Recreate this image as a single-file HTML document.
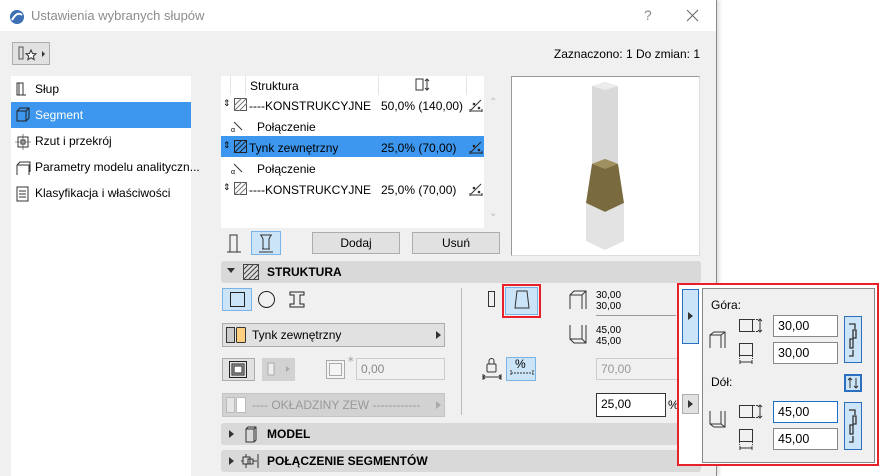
<!DOCTYPE html>
<html><head><meta charset="utf-8"><style>
*{box-sizing:border-box;margin:0;padding:0}
body{width:879px;height:476px;overflow:hidden;background:#fff;font-family:"Liberation Sans",sans-serif;font-size:12px;color:#000;position:relative}
.a{position:absolute}
.dlg{left:0;top:0;width:717px;height:476px;background:#f0f0f0;border-right:1px solid #8a8a8a;box-shadow:2px 0 4px rgba(0,0,0,.15)}
.btn{position:absolute;background:#e1e1e1;border:1px solid #adadad;text-align:center;line-height:20px;font-size:12px}
.sel{background:#cce4f7;border:1px solid #7ab4e6}
.inp{position:absolute;background:#fff;border:1px solid #7a7a7a;padding-left:4px;line-height:20px;font-size:12px}
.hdr{position:absolute;left:221px;width:480px;height:22px;background:#d9d9d9;border-radius:3px;font-weight:bold;font-size:12px;line-height:22px}
.li{position:absolute;left:35px;font-size:12px}
</style></head><body>
<div class="a dlg"></div>
<div class="a" style="left:0;top:0;width:716px;height:31px;background:#fff"></div>
<svg class="a" style="left:9px;top:9px" width="16" height="16"><circle cx="8" cy="8" r="7" fill="#3d6fb6"/><path d="M3 11 Q8 2 13 6" stroke="#fff" stroke-width="2" fill="none"/></svg>
<div class="a" style="left:31px;top:8px;font-size:13px;color:#8c8c8c">Ustawienia wybranych słupów</div>
<div class="a" style="left:644px;top:7px;font-size:14px;color:#888">?</div>
<svg class="a" style="left:686px;top:9px" width="13" height="13"><path d="M1 1L12 12M12 1L1 12" stroke="#666" stroke-width="1"/></svg>
<div class="btn" style="left:12px;top:42px;width:38px;height:23px"></div>
<svg class="a" style="left:16px;top:45px" width="32" height="18"><rect x="3" y="2" width="4" height="12" fill="none" stroke="#555"/><path d="M15 5l1.5 3.5 3.5.3-2.7 2.3.9 3.6-3.2-2-3.2 2 .9-3.6-2.7-2.3 3.5-.3z" fill="#fff" stroke="#333"/><path d="M26 6l3 3-3 3z" fill="#333"/></svg>
<div class="a" style="left:480px;top:47px;width:220px;text-align:right;font-size:12px">Zaznaczono: 1 Do zmian: 1</div>
<div class="a" style="left:11px;top:76px;width:180px;height:400px;background:#fff"></div>
<div class="a" style="left:11px;top:102px;width:180px;height:26px;background:#3d97ef"></div>
<svg class="a" style="left:15px;top:81px" width="16" height="16"><path d="M2 2h6v12H2zM4 2v12M8 14l3 0" stroke="#333" fill="none"/></svg>
<div class="li" style="top:82px">Słup</div>
<svg class="a" style="left:15px;top:107px" width="16" height="16"><path d="M2 4h9v10H2zM2 4l3-3h9v10l-3 3M11 4l3-3" stroke="#222" fill="none"/></svg>
<div class="li" style="top:108px;color:#fff">Segment</div>
<svg class="a" style="left:15px;top:134px" width="16" height="16"><rect x="3" y="3" width="10" height="10" fill="none" stroke="#333"/><rect x="6" y="6" width="4" height="4" fill="none" stroke="#333"/><path d="M8 0v16M0 8h16" stroke="#333" stroke-width=".6"/></svg>
<div class="li" style="top:134px">Rzut i przekrój</div>
<svg class="a" style="left:15px;top:160px" width="16" height="16"><path d="M2 5h12v10M2 5v10M2 5l3-3h10v10" stroke="#333" fill="none"/></svg>
<div class="li" style="top:160px">Parametry modelu analityczn...</div>
<svg class="a" style="left:16px;top:186px" width="14" height="16"><rect x="1" y="1" width="11" height="14" fill="none" stroke="#333"/><path d="M3 5h7M3 8h7M3 11h7" stroke="#333"/></svg>
<div class="li" style="top:186px">Klasyfikacja i właściwości</div>
<div class="a" style="left:221px;top:76px;width:263px;height:152px;background:#fff"></div>
<div class="a" style="left:484px;top:76px;width:16px;height:152px;background:#f0f0f0"></div>
<div class="a" style="left:489px;top:97px;font-size:10px;color:#bbb">&#8963;</div>
<div class="a" style="left:489px;top:208px;font-size:10px;color:#bbb">&#8964;</div>
<div class="a" style="left:230px;top:76px;width:1px;height:19px;background:#e5e5e5"></div>
<div class="a" style="left:245px;top:76px;width:1px;height:19px;background:#e5e5e5"></div>
<div class="a" style="left:378px;top:76px;width:1px;height:19px;background:#e5e5e5"></div>
<div class="a" style="left:466px;top:76px;width:1px;height:19px;background:#e5e5e5"></div>
<div class="a" style="left:250px;top:79px">Struktura</div>
<svg class="a" style="left:415px;top:78px" width="16" height="14"><rect x="1" y="1" width="7" height="11" fill="none" stroke="#333"/><path d="M12 1v11M10 3l2-2 2 2M10 10l2 2 2-2" stroke="#333" fill="none"/></svg>
<div class="a" style="left:221px;top:136px;width:263px;height:21px;background:#3d97ef"></div>
<div class="a" style="left:223px;top:98px;font-size:9px">&#8661;</div>
<svg class="a" style="left:234px;top:98px" width="13" height="13"><rect x=".5" y=".5" width="12" height="12" fill="#fff" stroke="#555"/><path d="M0 8L8 0M0 13L13 0M5 13L13 5" stroke="#777"/></svg>
<div class="a" style="left:249px;top:99px">----KONSTRUKCYJNE</div>
<div class="a" style="left:381px;top:99px">50,0% (140,00)</div>
<svg class="a" style="left:231px;top:121px" width="12" height="11"><path d="M3 1l8 8" stroke="#333"/><text x="0" y="11" font-size="7" font-family="Liberation Sans">α</text></svg>
<div class="a" style="left:257px;top:120px">Połączenie</div>
<div class="a" style="left:223px;top:140px;font-size:9px">&#8661;</div>
<svg class="a" style="left:234px;top:140px" width="13" height="13"><rect x=".5" y=".5" width="12" height="12" fill="#3d97ef" stroke="#222"/><path d="M0 8L8 0M0 13L13 0M5 13L13 5" stroke="#222"/></svg>
<div class="a" style="left:249px;top:141px">Tynk zewnętrzny</div>
<div class="a" style="left:381px;top:141px">25,0% (70,00)</div>
<svg class="a" style="left:231px;top:163px" width="12" height="11"><path d="M3 1l8 8" stroke="#333"/><text x="0" y="11" font-size="7" font-family="Liberation Sans">α</text></svg>
<div class="a" style="left:257px;top:162px">Połączenie</div>
<div class="a" style="left:223px;top:182px;font-size:9px">&#8661;</div>
<svg class="a" style="left:234px;top:182px" width="13" height="13"><rect x=".5" y=".5" width="12" height="12" fill="#fff" stroke="#555"/><path d="M0 8L8 0M0 13L13 0M5 13L13 5" stroke="#777"/></svg>
<div class="a" style="left:249px;top:183px">----KONSTRUKCYJNE</div>
<div class="a" style="left:381px;top:183px">25,0% (70,00)</div>
<svg class="a" style="left:469px;top:98px" width="14" height="14"><path d="M2 12L12 2M1 13h12M1 11v3M13 11v3" stroke="#333"/><circle cx="5" cy="6" r="1.3" fill="#333"/><circle cx="10" cy="10" r="1.3" fill="#333"/></svg>
<svg class="a" style="left:469px;top:140px" width="14" height="14"><path d="M2 12L12 2M1 13h12M1 11v3M13 11v3" stroke="#222"/><circle cx="5" cy="6" r="1.3" fill="#222"/><circle cx="10" cy="10" r="1.3" fill="#222"/></svg>
<svg class="a" style="left:469px;top:182px" width="14" height="14"><path d="M2 12L12 2M1 13h12M1 11v3M13 11v3" stroke="#333"/><circle cx="5" cy="6" r="1.3" fill="#333"/><circle cx="10" cy="10" r="1.3" fill="#333"/></svg>
<svg class="a" style="left:226px;top:233px" width="16" height="20"><path d="M1 19h14M4 19V2h7v17" stroke="#333" fill="none"/></svg>
<div class="a sel" style="left:251px;top:231px;width:30px;height:24px"></div>
<svg class="a" style="left:257px;top:233px" width="18" height="20"><path d="M2 19h14M3 2h12M4 2l2 4v10h6V6l2-4M5 16h8" stroke="#333" fill="none"/></svg>
<div class="btn" style="left:312px;top:232px;width:88px;height:22px">Dodaj</div>
<div class="btn" style="left:412px;top:232px;width:88px;height:22px">Usuń</div>
<div class="a" style="left:511px;top:76px;width:189px;height:180px;background:#fff;border:1px solid #999;border-right-color:#ddd;border-bottom-color:#ddd"></div>
<svg class="a" style="left:512px;top:77px" width="188" height="178"><path d="M93 5l13 4v78l-13 4-13-4V9z" fill="#d9d9d9"/><path d="M80 9l13-4 13 4-13 4z" fill="#ececec"/><path d="M93 82l13 5 6 39-19 9-19-9 6-39z" fill="#7a6a40"/><path d="M80 87l13-5 13 5-13 5z" fill="#a0905f"/><path d="M74 126l19 9 19-9v38l-19 9-19-9z" fill="#e3e3e3"/></svg>
<div class="hdr" style="top:261px"><span style="position:absolute;left:46px">STRUKTURA</span></div>
<svg class="a" style="left:227px;top:268px" width="8" height="6"><path d="M0 0h8L4 5z" fill="#333"/></svg>
<svg class="a" style="left:243px;top:264px" width="16" height="16"><rect x=".5" y=".5" width="15" height="15" fill="#ddd" stroke="#444"/><path d="M0 6L6 0M0 11L11 0M0 16L16 0M5 16L16 5M10 16L16 10" stroke="#444"/></svg>
<div class="a sel" style="left:222px;top:288px;width:30px;height:23px"></div>
<div class="a" style="left:230px;top:292px;width:15px;height:15px;border:1px solid #222"></div>
<div class="a" style="left:258px;top:291px;width:17px;height:17px;border:1px solid #222;border-radius:50%"></div>
<svg class="a" style="left:289px;top:291px" width="16" height="17"><path d="M1 1h14v3h-4v9h4v3H1v-3h4V4H1z" fill="none" stroke="#222"/></svg>
<div class="btn" style="left:222px;top:323px;width:223px;height:24px;text-align:left"></div>
<svg class="a" style="left:226px;top:327px" width="22" height="16"><rect x=".5" y=".5" width="8" height="15" fill="#ccc" stroke="#333"/><rect x="10.5" y=".5" width="9" height="15" rx="1" fill="#ffd080" stroke="#333"/></svg>
<div class="a" style="left:252px;top:328px">Tynk zewnętrzny</div>
<svg class="a" style="left:436px;top:331px" width="5" height="8"><path d="M0 0l5 4-5 4z" fill="#333"/></svg>
<div class="btn" style="left:222px;top:358px;width:33px;height:23px"></div>
<svg class="a" style="left:229px;top:361px" width="18" height="17"><rect x=".5" y=".5" width="17" height="16" fill="none" stroke="#222"/><rect x="3" y="3" width="12" height="11" fill="#bbb" stroke="#222"/><rect x="5" y="5" width="8" height="7" fill="#fff" stroke="#222"/></svg>
<div class="a" style="left:262px;top:358px;width:33px;height:23px;background:#d2d2d2"></div>
<svg class="a" style="left:265px;top:362px" width="28" height="15"><rect x="3" y="1" width="6" height="12" fill="#eee" stroke="#aaa"/><path d="M21 4l4 3-4 3z" fill="#aaa"/></svg>
<div class="a" style="left:326px;top:360px;width:19px;height:19px;border:1px solid #aaa;background:#f5f5f5"></div>
<div class="a" style="left:329px;top:363px;width:13px;height:13px;border:1px solid #aaa"></div>
<div class="a" style="left:347px;top:354px;font-size:9px;color:#aaa">&#8727;</div>
<div class="inp" style="left:356px;top:358px;width:89px;height:22px;border-color:#ccc;color:#888;background:#f0f0f0">0,00</div>
<div class="a" style="left:222px;top:393px;width:223px;height:24px;background:#d2d2d2;border:1px solid #c4c4c4"></div>
<svg class="a" style="left:226px;top:397px" width="22" height="16"><rect x=".5" y=".5" width="8" height="15" fill="#e5e5e5" stroke="#bbb"/><rect x="10.5" y=".5" width="9" height="15" rx="1" fill="#fff" stroke="#bbb"/></svg>
<div class="a" style="left:252px;top:398px;color:#999">---- OKŁADZINY ZEW ------------</div>
<svg class="a" style="left:436px;top:401px" width="5" height="8"><path d="M0 0l5 4-5 4z" fill="#aaa"/></svg>
<div class="a" style="left:461px;top:288px;width:1px;height:127px;background:#bbb"></div>
<div class="a" style="left:488px;top:291px;width:7px;height:16px;border:1px solid #333"></div>
<div class="a" style="left:502px;top:284px;width:39px;height:34px;border:2px solid #e8202a"></div>
<div class="a sel" style="left:505px;top:287px;width:33px;height:28px"></div>
<svg class="a" style="left:513px;top:290px" width="18" height="20"><path d="M4 1h10l2 17H2z" fill="none" stroke="#333"/></svg>
<svg class="a" style="left:568px;top:290px" width="20" height="20"><path d="M2 19V5l4-4h12v18M2 5h12v14M14 5l4-4" stroke="#333" fill="none"/></svg>
<div class="a" style="left:596px;top:290px;font-size:10px;line-height:11px">30,00<br>30,00</div>
<div class="a" style="left:596px;top:315px;width:80px;height:1px;background:#999"></div>
<svg class="a" style="left:568px;top:324px" width="20" height="20"><path d="M2 1v14l4 4h12V1M2 15h12V1M14 15l4 4" stroke="#333" fill="none"/></svg>
<div class="a" style="left:596px;top:325px;font-size:10px;line-height:11px">45,00<br>45,00</div>
<svg class="a" style="left:482px;top:357px" width="20" height="24"><rect x="5" y="7" width="9" height="8" rx="1" fill="none" stroke="#333"/><path d="M7 7V4a2.5 2.5 0 0 1 5 0v3" fill="none" stroke="#333"/><path d="M1 20h18M1 17v6M19 17v6M3 18l-2 2 2 2M17 18l2 2-2 2" stroke="#333" fill="none"/></svg>
<div class="a sel" style="left:506px;top:357px;width:30px;height:24px"></div>
<div class="a" style="left:515px;top:357px;font-size:12px">%</div>
<svg class="a" style="left:510px;top:369px" width="24" height="8"><path d="M1 1v6M23 1v6M1 4h22" stroke="#333" stroke-dasharray="2 1"/></svg>
<div class="inp" style="left:596px;top:358px;width:100px;height:22px;border-color:#ccc;color:#999;background:#f0f0f0">70,00</div>
<div class="inp" style="left:596px;top:393px;width:70px;height:24px;border-color:#333">25,00</div>
<div class="a" style="left:668px;top:398px">%</div>
<div class="hdr" style="top:423px"><span style="position:absolute;left:46px">MODEL</span></div>
<svg class="a" style="left:229px;top:430px" width="6" height="8"><path d="M0 0l5 4-5 4z" fill="#333"/></svg>
<svg class="a" style="left:245px;top:426px" width="12" height="17"><path d="M1 3h8v13H1zM1 3l2-2h8v13l-2 2M9 3l2-2" fill="none" stroke="#333"/></svg>
<div class="hdr" style="top:450px"><span style="position:absolute;left:46px">POŁĄCZENIE SEGMENTÓW</span></div>
<svg class="a" style="left:229px;top:457px" width="6" height="8"><path d="M0 0l5 4-5 4z" fill="#333"/></svg>
<svg class="a" style="left:241px;top:453px" width="20" height="16"><rect x="2" y="4" width="7" height="7" fill="none" stroke="#333"/><rect x="7" y="6" width="5" height="5" fill="none" stroke="#333"/><path d="M0 8h2M12 8h4M17 1v14M5 1v3M5 11v4" stroke="#333"/></svg>
<div class="a" style="left:677px;top:283px;width:202px;height:183px;border:2px solid #e8202a;background:#fff"></div>
<div class="a sel" style="left:682px;top:289px;width:17px;height:55px;border-color:#2c6fc0"></div>
<svg class="a" style="left:688px;top:312px" width="5" height="8"><path d="M0 0l5 4-5 4z" fill="#333"/></svg>
<div class="a" style="left:682px;top:394px;width:17px;height:20px;background:#e1e1e1;border:1px solid #adadad"></div>
<svg class="a" style="left:688px;top:400px" width="5" height="8"><path d="M0 0l5 4-5 4z" fill="#333"/></svg>
<div class="a" style="left:702px;top:288px;width:173px;height:175px;background:#f0f0f0;border:1px solid #888"></div>
<div class="a" style="left:711px;top:298px">Góra:</div>
<svg class="a" style="left:709px;top:331px" width="18" height="18"><path d="M1 17V4l4-3h11v16M1 4h11v13M12 4l4-3" stroke="#333" fill="none"/></svg>
<svg class="a" style="left:739px;top:318px" width="25" height="15"><rect x=".5" y="1.5" width="13" height="12" fill="none" stroke="#333"/><path d="M14 1.5h5M14 13.5h5" stroke="#333" stroke-dasharray="2 1"/><path d="M21 2v11M19 3l2-2 2 2M19 12l2 2 2-2" stroke="#333" fill="none"/></svg>
<svg class="a" style="left:739px;top:343px" width="15" height="21"><rect x=".5" y=".5" width="13" height="12" fill="none" stroke="#333"/><path d="M.5 13v4M13.5 13v4" stroke="#333" stroke-dasharray="1 1"/><path d="M1 19h12M1 17v4M13 17v4" stroke="#333"/></svg>
<div class="inp" style="left:773px;top:315px;width:65px;height:22px;border-color:#888;font-size:12.5px">30,00</div>
<div class="inp" style="left:773px;top:342px;width:65px;height:22px;border-color:#888;font-size:12.5px">30,00</div>
<div class="a sel" style="left:844px;top:316px;width:18px;height:47px;border-color:#2c6fc0"></div>
<svg class="a" style="left:846px;top:320px" width="14" height="40"><path d="M3 4h6v5M7 10v8h3v-8zM4 19v9h3v-9zM7 30v6H3" stroke="#333" fill="none" stroke-width="1.3"/></svg>
<div class="a" style="left:711px;top:375px">Dół:</div>
<div class="a sel" style="left:844px;top:374px;width:18px;height:18px;border:2px solid #2c6fc0"></div>
<svg class="a" style="left:846px;top:376px" width="14" height="14"><path d="M4 12V2M2 4l2-2 2 2M10 2v10M8 10l2 2 2-2" stroke="#333" fill="none"/></svg>
<svg class="a" style="left:709px;top:410px" width="18" height="18"><path d="M1 1v13l4 3h11V1M1 14h11V1M12 14l4 3" stroke="#333" fill="none"/></svg>
<svg class="a" style="left:739px;top:404px" width="25" height="15"><rect x=".5" y="1.5" width="13" height="12" fill="none" stroke="#333"/><path d="M14 1.5h5M14 13.5h5" stroke="#333" stroke-dasharray="2 1"/><path d="M21 2v11M19 3l2-2 2 2M19 12l2 2 2-2" stroke="#333" fill="none"/></svg>
<svg class="a" style="left:739px;top:429px" width="15" height="21"><rect x=".5" y=".5" width="13" height="12" fill="none" stroke="#333"/><path d="M.5 13v4M13.5 13v4" stroke="#333" stroke-dasharray="1 1"/><path d="M1 19h12M1 17v4M13 17v4" stroke="#333"/></svg>
<div class="inp" style="left:773px;top:401px;width:65px;height:22px;border-color:#1a6fc8;font-size:12.5px">45,00</div>
<div class="inp" style="left:773px;top:428px;width:65px;height:22px;border-color:#888;font-size:12.5px">45,00</div>
<div class="a sel" style="left:844px;top:402px;width:18px;height:48px;border-color:#2c6fc0"></div>
<svg class="a" style="left:846px;top:406px" width="14" height="40"><path d="M3 4h6v5M7 10v8h3v-8zM4 19v9h3v-9zM7 30v6H3" stroke="#333" fill="none" stroke-width="1.3"/></svg>
</body></html>
